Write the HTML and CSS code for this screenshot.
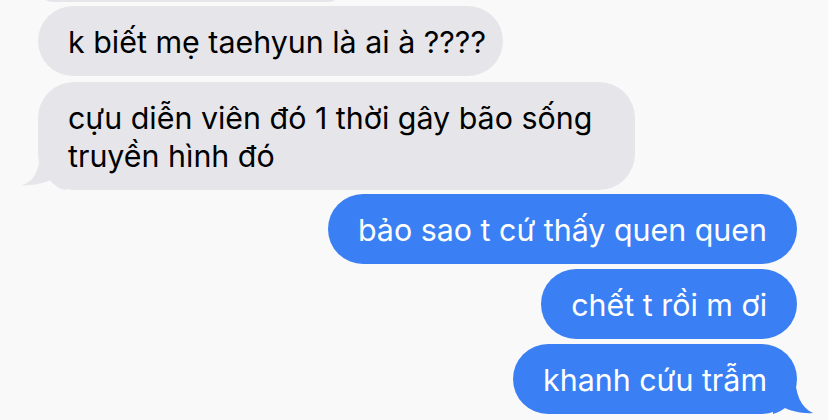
FILE: index.html
```html
<!DOCTYPE html>
<html lang="vi">
<head>
  <meta charset="UTF-8">
  <meta name="viewport" content="width=device-width, initial-scale=1.0">
  <title>Tin nhắn</title>
  <link rel="stylesheet" href="styles.css">
</head>
<body>
  <div class="thread">
    <div class="bubble received cut"></div>

    <div class="bubble received first">k biết mẹ taehyun là ai à ????</div>

    <div class="bubble received two-line">
      cựu diễn viên đó 1 thời gây bão sống<br>truyền hình đó
      <svg class="tail tail-left" width="40" height="40" viewBox="0 0 40 40">
        <path d="M18 0 C18 20 12 32 0 35 C10 36 22 33 28 30 C32 35 37 39 44 40 L44 0 Z"/>
      </svg>
    </div>

    <div class="bubble sent gap-sender">bảo sao t cứ thấy quen quen</div>
    <div class="bubble sent">chết t rồi m ơi</div>
    <div class="bubble sent last">
      khanh cứu trẫm
      <svg class="tail tail-right" width="40" height="40" viewBox="0 0 40 40">
        <path d="M22 0 C22 20 28 34 40 39 C30 40 18 37 12 34 C8 37 4 39 0 40 L0 0 Z"/>
      </svg>
    </div>
  </div>
</body>
</html>
```

FILE: styles.css
```css
body {
  margin: 0;
  background-color: #f9f9f9;
  font-family: Inter, "Noto Sans", sans-serif;
  overflow: hidden;
}
.thread {
  display: flex;
  flex-direction: column;
  padding: 0 31px 0 38px;
}
.bubble {
  position: relative;
  font-size: 30.4px;
  line-height: 38px;
  padding: 17px 30px 15px;
  border-radius: 36px;
  margin-top: 5px;
  white-space: nowrap;
}
.received {
  align-self: flex-start;
  background-color: #e6e6ea;
  color: #000;
}
.sent {
  align-self: flex-end;
  background-color: #3a7ff3;
  color: #fff;
}
.cut {
  width: 305px;
  height: 30px;
  padding: 0;
  margin-top: -28px;
}
.first {
  margin-top: 4px;
  padding-right: 17px;
}
.two-line {
  margin-top: 6px;
  padding-right: 43px;
}
.gap-sender {
  margin-top: 4px;
}
.tail {
  position: absolute;
  bottom: 0;
  overflow: visible;
}
.tail-left {
  left: -16px;
  fill: #e6e6ea;
}
.tail-right {
  right: -16px;
  fill: #3a7ff3;
}
```
